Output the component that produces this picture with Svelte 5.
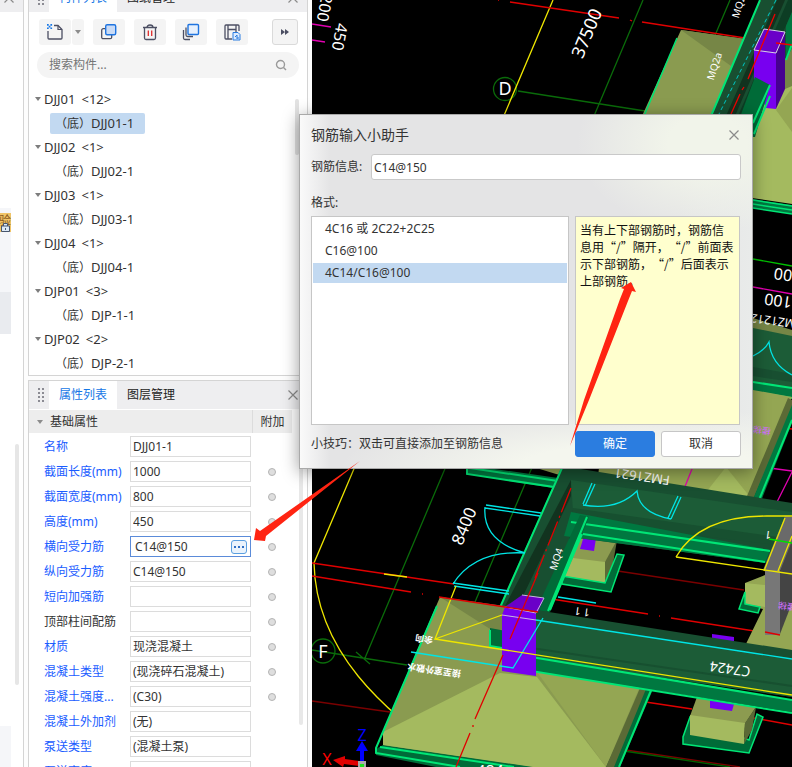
<script>
  let query = $state("");
  let selected = $state("DJJ01-1");
  let steel = $state("C14@150");
  let format = $state(2);
  let open = $state(true);

  const tree = [
    { name: "DJJ01", count: 12, child: "DJJ01-1" },
    { name: "DJJ02", count: 1, child: "DJJ02-1" },
    { name: "DJJ03", count: 1, child: "DJJ03-1" },
    { name: "DJJ04", count: 1, child: "DJJ04-1" },
    { name: "DJP01", count: 3, child: "DJP-1-1" },
    { name: "DJP02", count: 2, child: "DJP-2-1" },
  ];

  const props = [
    { label: "名称", value: "DJJ01-1" },
    { label: "截面长度(mm)", value: "1000", extra: true },
    { label: "截面宽度(mm)", value: "800", extra: true },
    { label: "高度(mm)", value: "450", extra: true },
    { label: "横向受力筋", value: "C14@150", extra: true, active: true },
    { label: "纵向受力筋", value: "C14@150", extra: true },
    { label: "短向加强筋", value: "", extra: true },
    { label: "顶部柱间配筋", value: "", extra: true, plain: true },
    { label: "材质", value: "现浇混凝土", extra: true },
    { label: "混凝土类型", value: "(现浇碎石混凝土)", extra: true },
    { label: "混凝土强度...", value: "(C30)", extra: true },
    { label: "混凝土外加剂", value: "(无)" },
    { label: "泵送类型", value: "(混凝土泵)" },
    { label: "泵送高度(m)", value: "" },
  ];

  const formats = ["4C16 或 2C22+2C25", "C16@100", "4C14/C16@100"];
</script>

{#snippet cross()}
  <svg width="12" height="12" viewBox="0 0 12 12" aria-hidden="true">
    <path d="M1.5 1.5l9 9M10.5 1.5l-9 9" fill="none" stroke="#8a8a8a" stroke-width="1.2" />
  </svg>
{/snippet}

{#snippet grip()}
  <svg class="grip" width="8" height="16" viewBox="0 0 8 16" aria-hidden="true">
    {#each [1, 5, 9, 13] as y}
      <rect x="1" {y} width="2" height="2" fill="#8b8b93" />
      <rect x="5" {y} width="2" height="2" fill="#8b8b93" />
    {/each}
  </svg>
{/snippet}

<div class="app" lang="zh-CN">
  <aside class="rail">
    <div class="rail-head">{@render cross()}</div>
    <div class="rail-group">
      <div class="rail-badge">
        <span>验</span>
        <svg width="9" height="10" viewBox="0 0 9 10" aria-hidden="true">
          <path d="M2.5 4V1.5h4V4M.5 4h8v5.5h-8z" fill="#dce8f5" stroke="#46556e" />
          <path d="M4.5 6v2" stroke="#46556e" />
        </svg>
      </div>
    </div>
    <div class="rail-row"></div>
    <div class="rail-thumb"></div>
    <div class="rail-end"></div>
  </aside>

  <div class="side">
    <section class="panel list-panel">
      <div class="tabs cut">
        {@render grip()}
        <button class="tab active">构件列表</button>
        <button class="tab">图纸管理</button>
        <button class="close" aria-label="关闭">{@render cross()}</button>
      </div>

      <div class="toolbar">
        <div class="split">
          <button class="tool" aria-label="新建">
            <svg width="18" height="18" viewBox="0 0 18 18">
              <path d="M8 2.5h4l4 4V15q0 1-1 1H3q-1 0-1-1V8" fill="none" stroke="#4c4f63" stroke-width="1.3" />
              <path d="M12 2.5v4h4" fill="none" stroke="#4c4f63" stroke-width="1.2" />
              <path d="M1 1h1.7v1.7H1zM4.4 1h1.7v1.7H4.4zM2.7 2.7h1.7v1.7H2.7zM1 4.4h1.7v1.7H1zM4.4 4.4h1.7v1.7H4.4z" fill="#1677e6" />
            </svg>
          </button>
          <button class="tool arrow" aria-label="更多新建">
            <svg width="6" height="4" viewBox="0 0 6 4"><path d="M0 0h6L3 4z" fill="#8c8c8c" /></svg>
          </button>
        </div>
        <button class="tool" aria-label="复制">
          <svg width="18" height="18" viewBox="0 0 18 18">
            <rect x="1.7" y="5.7" width="10" height="10" rx="1.5" fill="none" stroke="#4c4f63" stroke-width="1.3" />
            <rect x="5.7" y="1.7" width="10" height="10" rx="1.5" fill="#c9dbf6" stroke="#1f74e0" stroke-width="1.4" />
          </svg>
        </button>
        <button class="tool" aria-label="删除">
          <svg width="18" height="18" viewBox="0 0 18 18">
            <path d="M2 4.5h14M3.5 5v10q0 1.5 1.5 1.5h8q1.5 0 1.5-1.5V5M6 4.5q0-2.5 3-2.5t3 2.5" fill="none" stroke="#4c4f63" stroke-width="1.3" />
            <path d="M7.3 7.5V13M10.7 7.5V13" stroke="#e02b2b" stroke-width="1.3" />
          </svg>
        </button>
        <button class="tool" aria-label="层间复制">
          <svg width="18" height="18" viewBox="0 0 18 18">
            <path d="M1.5 7v8q0 1.5 1.5 1.5h5M4 4.5V12q0 1.5 1.5 1.5H11" fill="none" stroke="#4c4f63" stroke-width="1.3" />
            <rect x="6" y="1.5" width="10.5" height="10" rx="1" fill="#e6f0fd" stroke="#1f74e0" stroke-width="1.4" />
          </svg>
        </button>
        <button class="tool" aria-label="存档">
          <svg width="18" height="18" viewBox="0 0 18 18">
            <path d="M9 16H3q-1 0-1-1V3q0-1 1-1h12q1 0 1 1v5M5 2v14M5 6.5h8V2M13 6.5V9" fill="none" stroke="#4c4f63" stroke-width="1.3" />
            <path d="M10 9.5h5l2 2V17h-7z" fill="#dcebfd" stroke="#2b7de0" />
            <path d="M12 14l2-2v4M15 14v2" stroke="#2b7de0" fill="none" />
          </svg>
        </button>
        <button class="tool more" aria-label="展开">
          <svg width="8" height="6" viewBox="0 0 8 6"><path d="M0 0l4 3-4 3zM4 0l4 3-4 3z" fill="#4c4f63" /></svg>
        </button>
      </div>

      <label class="search">
        <input type="text" placeholder="搜索构件..." aria-label="搜索构件" bind:value={query} />
        <svg width="12" height="12" viewBox="0 0 12 12" aria-hidden="true">
          <circle cx="5.5" cy="5.5" r="4" fill="none" stroke="#9a9a9a" stroke-width="1.4" />
          <path d="M8.5 8.5l2.5 2.5" stroke="#9a9a9a" stroke-width="1.4" />
        </svg>
      </label>

      <div class="tree">
        {#each tree as node}
          <div class="node">
            <svg width="6" height="4" viewBox="0 0 6 4" aria-hidden="true"><path d="M0 0h6L3 4z" fill="#7d7d7d" /></svg>
            <span class="code">{node.name}</span>
            <span class="code count">&lt;{node.count}&gt;</span>
          </div>
          <div class="leaf-row">
            <button
              class={selected == node.child ? "leaf active" : "leaf"}
              onclick={() => (selected = node.child)}>（底）<span class="code">{node.child}</span></button
            >
          </div>
        {/each}
        <div class="thumb"></div>
      </div>
    </section>

    <section class="panel prop-panel">
      <div class="tabs">
        {@render grip()}
        <button class="tab active">属性列表</button>
        <button class="tab">图层管理</button>
        <button class="close" aria-label="关闭">{@render cross()}</button>
      </div>
      <div class="prop-body">
        <div class="props">
          <div class="prop-head">
            <svg width="6" height="4" viewBox="0 0 6 4" aria-hidden="true"><path d="M0 0h6L3 4z" fill="#8c8c8c" /></svg>
            <span class="group">基础属性</span>
            <span class="attach">附加</span>
          </div>
          {#each props as prop, i}
            <div class="prop">
              <label for="prop-{i}" class:plain={prop.plain}>{prop.label}</label>
              <div class="field" class:focus={prop.active}>
                <input id="prop-{i}" type="text" value={prop.value} />
                {#if prop.active}
                  <button class="dots" aria-label="打开钢筋输入小助手" onclick={() => (open = true)}>
                    <svg width="10" height="2" viewBox="0 0 10 2"><path d="M0 0h2v2H0zM4 0h2v2H4zM8 0h2v2H8z" fill="#2f6fc4" /></svg>
                  </button>
                {/if}
              </div>
              {#if prop.extra}
                <input class="mark" type="checkbox" aria-label="{prop.label} 附加" />
              {/if}
            </div>
          {/each}
        </div>
        <div class="prop-thumb"></div>
      </div>
    </section>
  </div>

  <main class="view">
    <svg class="scene" viewBox="312 0 480 767" preserveAspectRatio="xMinYMin slice" aria-label="三维视图">
      <!-- axis grid -->
      <g fill="none" stroke="#0a6b0a" stroke-width="1.3">
        <path d="M643 0L365 658M730 0L475 602M518 91L645 111M312 650l95 15M356 652l14 12" />
        <circle cx="505" cy="89" r="11.5" />
        <circle cx="323" cy="651" r="12" />
      </g>
      <path d="M553 0L314 563C316 650 380 710 464 767" fill="none" stroke="#eee600" stroke-width="1.3" />
      <g fill="none" stroke="#e00000" stroke-width="1.3">
        <path d="M498 0h1M510 2l109 16M630 20l2 1M642 22l103 16M312 563l142 21M312 576l99 16M422 594h1M545 598l103 16M659 616h1M671 618l109 17M639 701l53 8M754 718l38 7M783 428l9 1" />
        <path d="M312 701l78 11M611 570l133 20M619 749l121 18" stroke="#7a0000" />
        <path d="M384 574l23 3" stroke="#eee600" />
        <path d="M624 751l106 16" stroke="#006000" />
      </g>
      <g fill="none" stroke="#e000b0" stroke-width="1.3">
        <path d="M312 24l19 3M312 40l13 2M753 287l39 7M762 467l30 4M792 472l-15 30" />
        <path d="M753 259l39 7" stroke="#00c000" />
      </g>

      <!-- footing at the top right -->
      <path d="M681 30l64 9-34 77h-69z" fill="#8a9b50" />
      <path d="M681 30l64 9-14 27z" fill="#768646" />
      <path d="M677 38l-33 78" stroke="#00e676" stroke-width="1.5" />
      <path d="M776 40l16-10v174l-40-6v-90z" fill="#a4ba5f" />
      <path d="M785 50l7-6v42l-7 3z" fill="#768646" />
      <path d="M776 110l16-22v44z" fill="#94a653" />
      <path d="M753 199l39 6v9l-39-6z" fill="#007840" />
      <path d="M753 200l39 6M753 204l39 6M753 208l39 6" stroke="#00e676" stroke-width="1.5" />
      <path d="M760 0h32v45l-34 71h-47z" fill="#184f31" />
      <path d="M777 0h8l-50 116h-9z" fill="#12331f" />
      <path d="M792 0v12l-46 104h-8L788 0z" fill="#0d3d24" />
      <path d="M792 12v36l-6 12v-34z" fill="#007840" />
      <path d="M760 0l-49 116M792 44l-6 16" stroke="#00e676" stroke-width="2" />
      <path d="M776 0l-58 116" stroke="#00c8c8" stroke-dasharray="4 3" />
      <path d="M764 29l21 3-9 21-22-3z" fill="#6a00c8" />
      <path d="M754 50l22 3v56l-10-1-12-28z" fill="#7800f0" />
      <path d="M776 53l9-21v57l-9 20z" fill="#460090" />
      <path d="M764 29l21 3-9 21-22-3z" fill="none" stroke="#d8d0e8" />
      <path d="M755 77l15 8-15 52h-3v-20h-12z" fill="#006b38" />
      <path d="M770 85l-17 38M770 96l-16 38" stroke="#00e676" stroke-width="2" />
      <path d="M775 14l-27 65M744 87l-2 3M740 94l-9 20M776 43l16 2" stroke="#f00000" stroke-width="1.3" />

      <!-- right of the dialog -->
      <path d="M753 318l39 12v10l-39-8z" fill="#768646" />
      <path d="M753 328l39 8v62l-39-6z" fill="#1c5c37" />
      <path d="M753 367l39 7v8l-39-6z" fill="#184f31" />
      <path d="M753 382l39 6v10l-39-6z" fill="#007840" />
      <path d="M753 382l39 6M753 392l39 6" stroke="#00e676" stroke-width="2" />
      <path d="M753 356q12-6 16-14q2 22 23 33" fill="none" stroke="#00e5e5" stroke-width="1.3" />
      <path d="M600 460l153-70 39 7-44 105-150-26z" fill="#94a653" />
      <path d="M729 471l24-70 35-4-40 92z" fill="#94a653" />
      <path d="M726 467l24 30-43-6z" fill="#a4ba5f" />
      <path d="M788 398l4 2v10l-39 90-6-4z" fill="#5b6a36" />
      <path d="M792 405v18l-31 78-8-2z" fill="#007840" />
      <path d="M792 420l-33 80" stroke="#00e676" stroke-width="2" />
      <path d="M692 469l-8 20" stroke="#e000b0" stroke-width="1.3" />

      <!-- upper beam and the diagonal one -->
      <path d="M467 465l98 14-6 10-92-15z" fill="#007840" />
      <path d="M510 460h60l-4 17z" fill="#94a653" />
      <path d="M467 469v5l87 13M470 468l88 13" fill="none" stroke="#00e676" stroke-width="2" />
      <path d="M572 535l45 5-12 47-45-6z" fill="#8c9b50" />
      <path d="M573 558l32 4v21l-40-7z" fill="#a4ba5f" />
      <path d="M605 562l12-22-5 30-7 13z" fill="#5b6a36" />
      <path d="M562 576l43 7 12-29 7 1-13 37-49-8z" fill="#006b38" stroke="#00e676" stroke-width="1.5" />
      <path d="M584 536l12 2-2 13-14-2z" fill="#7800f0" />
      <path d="M562 466l230 37v47l-27 13-195-26-22 75-58 28V628z" fill="#184f31" />
      <path d="M571 480l221 32v31l-219-31z" fill="#1c5c37" />
      <path d="M573 508l219 31v8l-221-27z" fill="#175030" />
      <path d="M571 512l199 38-5 13-201-27z" fill="#007840" />
      <path d="M571 522l199 29M583 534l182 28" stroke="#00e676" stroke-width="2" />
      <path d="M571 480v16l-48 100-18 10z" fill="#12331f" />
      <path d="M580 515l9 2-39 95-14-2z" fill="#006b38" />
      <path d="M562 468l-72 162v16l15 3M587 517l-39 94M582 534l-32 76" fill="none" stroke="#00e676" stroke-width="2" />
      <path d="M571 488l-36 90" stroke="#e00000" stroke-width="1.3" stroke-dasharray="26 4 2 4" />
      <g fill="none" stroke="#00e5e5" stroke-width="1.3">
        <path d="M595 484l-10 22M592 483l-9 21M583 505q34 6 54-14q2 22 34 28M671 519l10-22M668 518l10-22" />
        <path d="M486 505l55 8M485 508l55 8M485 507q-3 34 40 46q-50-3-72 31M453 583l56 8M454 586l55 8M558 597l38 6" />
      </g>

      <!-- stair column -->
      <path d="M765 575l-20 8v22l18 4-20 41 49 6v-80z" fill="#94a653" />
      <path d="M745 583l20 2v22l-20-3z" fill="#a4ba5f" />
      <path d="M745 592l-6 17 19 4 2-6-15-3z" fill="#006b38" stroke="#00e676" stroke-width="1.5" />
      <path d="M785 516l7 1v40l-12 14-17-1z" fill="#6a6a6a" />
      <path d="M765 570h15v65h-15z" fill="#777" />
      <path d="M780 571l12-30v62l-12 31z" fill="#444" />
      <path d="M676 557q24-42 94-41h22M676 557l116 17M785 518l-21 53M792 536l-14 35" fill="none" stroke="#eee600" stroke-width="1.3" />
      <path d="M769 539l23 4" stroke="#00e000" stroke-width="1.3" />
      <path d="M765 632l15 3" stroke="#e00000" stroke-width="1.3" />

      <!-- large footing -->
      <path d="M383 745l-7 4v6l60 12h184l34-80-14-2-34 82z" fill="#006b38" />
      <path d="M440 597l65 10 137 83-36 77h-70l-153-22v-14z" fill="#8a9b50" />
      <path d="M440 597l65 9-4 30z" fill="#768646" />
      <path d="M383 732l117-59 37 4 69 90h-73l-150-22z" fill="#a4ba5f" />
      <path d="M537 672l103 14-34 81z" fill="#94a653" />
      <path d="M640 688l6 1-32 78h-8z" fill="#5b6a36" />
      <path d="M437 606l-61 142v5l84 14M380 747l134 20M652 688l-33 79" fill="none" stroke="#00e676" stroke-width="2" />
      <path d="M490 628l62 12v30h-21v-17l-41-7z" fill="#006b38" />

      <!-- lower small footing -->
      <path d="M690 717l-7 20v7l66 9 14-36-6-3-8 26z" fill="#006b38" stroke="#00e676" stroke-width="1.5" />
      <path d="M697 697l59 10-11 17-55-8z" fill="#8c9b50" />
      <path d="M690 715l55 8-1 21-54-9z" fill="#a4ba5f" />
      <path d="M745 723l11-16-4 23-8 14z" fill="#5b6a36" />
      <path d="M710 700l24 4-2 7-22-3zM712 634l22 3v6l-22-4z" fill="#7800f0" />

      <!-- lower beam -->
      <path d="M536 610l256 40v47l-256-38z" fill="#184f31" />
      <path d="M536 620l256 40v37l-261-40z" fill="#1c5c37" />
      <path d="M531 648l261 38" stroke="#175030" stroke-width="2" />
      <path d="M531 656l261 44v12l-261-41z" fill="#007840" />
      <path d="M792 700l-261-43v14l261 42" fill="none" stroke="#00e676" stroke-width="2" />
      <path d="M490 630v16l12 2" fill="none" stroke="#00e676" stroke-width="2" />
      <path d="M522 595l22 3-6 14-33-5z" fill="#6a00c8" />
      <path d="M505 607l31 6v63l-34-5v-56z" fill="#7800f0" />
      <path d="M522 595l22 3-8 15-31-6M502 615l34 5" fill="none" stroke="#c8b8e0" />
      <path d="M411 652l102 16 30-50M536 620l256 39" fill="none" stroke="#00e5e5" stroke-width="1.3" />
      <path d="M456 586l-21 53 67-24M435 639l357 56" fill="none" stroke="#eee600" stroke-width="1.3" />
      <path d="M439 597l99 15M538 573l-28 66M503 655l-28 64M473 725v2M470 733l-14 34" fill="none" stroke="#e00000" stroke-width="1.3" />

      <!-- labels -->
      <g class="labels" fill="#fff" text-anchor="middle">
        <text x="505" y="95" font-size="18">D</text>
        <text x="323" y="658" font-size="18">F</text>
        <g transform="translate(586 33) rotate(-67)"><text y="7" font-size="18">37500</text></g>
        <g transform="translate(464 526) rotate(-67)"><text y="6" font-size="17">8400</text></g>
        <g transform="translate(340 37) rotate(100)"><text y="6" font-size="16">450</text></g>
        <g transform="translate(325 8) rotate(100)"><text y="6" font-size="16">200</text></g>
        <g transform="translate(714 66) rotate(-72)"><text y="4" font-size="10">MQ2a</text></g>
        <g transform="translate(739 4) rotate(-72)"><text y="4" font-size="10">MQ2a</text></g>
        <g transform="translate(556 559) rotate(-72)"><text y="4" font-size="10">MQ4</text></g>
        <g transform="translate(730 669) rotate(188)"><text y="5" font-size="14">C7424</text></g>
        <g transform="translate(642 477) rotate(188)"><text y="5" font-size="13">FMZ1621</text></g>
        <g transform="translate(776 322) rotate(188)"><text y="5" font-size="12">FMZ1212</text></g>
        <g transform="translate(778 301) rotate(188)"><text y="6" font-size="16">100</text></g>
        <g transform="translate(783 275) rotate(188)"><text y="6" font-size="16">00</text></g>
        <g transform="translate(582 612) rotate(188)"><text y="4" font-size="11">1 1</text></g>
        <g transform="translate(768 535) rotate(188)"><text y="4" font-size="11">1</text></g>
        <g transform="translate(434 670) rotate(188)" font-weight="700"><text y="3" font-size="9">接至室外散水</text></g>
        <g transform="translate(424 639) rotate(188)" font-weight="700"><text y="3" font-size="9">余向</text></g>
        <g transform="translate(762 430) rotate(188)" fill="#d070ff"><text y="3" font-size="9">楼梯</text></g>
        <g transform="translate(787 606) rotate(188)" fill="#d070ff"><text y="3" font-size="9">楼梯</text></g>
        <text x="490" y="777" font-size="16">484</text>
        <text x="362" y="741" font-size="16" fill="#0000ff">Z</text>
        <text x="327" y="765" font-size="16" fill="#ff0000">X</text>
      </g>
      <path d="M362 741l6 10h-4v12h-4v-12h-4z" fill="#0000ff" />
      <path d="M333 760l12-4v3l14 2v5l-15-2-1 3z" fill="#e00000" />
      <path d="M358 761h8v6h-8z" fill="#aaa" />
      <path d="M360 764h4v3h-4z" fill="#20e020" />
    </svg>
  </main>

  {#if open}
    <div class="dialog" role="dialog" aria-labelledby="helper-title">
      <header>
        <h1 id="helper-title">钢筋输入小助手</h1>
        <button class="close" aria-label="关闭" onclick={() => (open = false)}>{@render cross()}</button>
      </header>
      <div class="steel">
        <label for="steel">钢筋信息:</label>
        <input id="steel" type="text" bind:value={steel} />
      </div>
      <p class="caption">格式:</p>
      <div class="columns">
        <div class="formats">
          {#each formats as item, i}
            <button class={format == i ? "active" : ""} onclick={() => (format = i)}>{item}</button>
          {/each}
        </div>
        <p class="note">当有上下部钢筋时，钢筋信息用“/”隔开，“/”前面表示下部钢筋，“/”后面表示上部钢筋。</p>
      </div>
      <footer>
        <span>小技巧：双击可直接添加至钢筋信息</span>
        <button class="primary" onclick={() => (open = false)}>确定</button>
        <button onclick={() => (open = false)}>取消</button>
      </footer>
    </div>
  {/if}

  <svg class="arrows" width="792" height="767" viewBox="0 0 792 767" aria-hidden="true">
    <path d="M360 461L260 531l-4-3-2 12 11 1 1-5z" fill="#ff2412" />
    <path d="M570 446l14-46 36-101 4-10-3-1 10-6 5 10-4-1-4 10-39 99z" fill="#ff2412" />
  </svg>
</div>

<style>
  :global(body) {
    margin: 0;
    background: #fff;
  }

  .app {
    position: relative;
    display: flex;
    height: 100vh;
    overflow: hidden;
    font: 12px/16px "Noto Sans", "Noto Sans CJK SC", sans-serif;
    color: #333;
    background: #fdfdfd;
  }

  .app * {
    box-sizing: border-box;
  }

  button,
  input {
    margin: 0;
    padding: 0;
    border: 0;
    background: none;
    font: inherit;
    color: inherit;
  }

  svg {
    display: block;
    flex: none;
  }

  .rail {
    flex: none;
    display: flex;
    flex-direction: column;
    width: 24px;
    border-right: 1px solid #d4d4d4;
    background: #fff;
  }

  .rail-head {
    display: flex;
    align-items: flex-end;
    justify-content: flex-end;
    height: 12px;
    padding: 0 8px 8px 0;
    background: #eeeef0;
  }

  .rail-group {
    width: 11px;
    height: 84px;
    margin-top: 196px;
    padding-top: 5px;
    background: #f5f6f9;
  }

  .rail-badge {
    position: relative;
    display: flex;
    justify-content: flex-end;
    height: 19px;
    overflow: hidden;
    color: #8a5a1c;
    background: #f0c468;
  }

  .rail-badge svg {
    position: absolute;
    right: 1px;
    bottom: 0;
  }

  .rail-row {
    width: 11px;
    height: 42px;
    background: #e9ebef;
  }

  .rail-thumb {
    width: 4px;
    height: 241px;
    margin: 110px 0 0 15px;
    border-radius: 2px;
    background: #e6e6e6;
  }

  .rail-end {
    flex: 1;
    width: 11px;
    margin-top: 41px;
    background: #f5f6f9;
  }

  .side {
    flex: none;
    display: flex;
    flex-direction: column;
    gap: 4px;
    width: 280px;
    margin: 0 4px;
  }

  .panel {
    border: 1px solid #d4d4d4;
    background: #fff;
    overflow: hidden;
  }

  .list-panel {
    flex: none;
    height: 376px;
    border-top: 0;
  }

  .prop-panel {
    flex: 1;
    display: flex;
    flex-direction: column;
    border-bottom: 0;
  }

  .tabs {
    flex: none;
    display: flex;
    align-items: center;
    height: 28px;
    background: #eeeef0;
  }

  .tabs.cut {
    align-items: flex-end;
    height: 12px;
    overflow: hidden;
  }

  .grip {
    margin: 6px 4px 6px 8px;
  }

  .tab {
    height: 28px;
    padding: 0 10px;
    color: #222;
  }

  .tab.active {
    color: #1677e6;
    background: #fff;
  }

  .tabs .close {
    margin-left: auto;
    padding: 8px;
  }

  .toolbar {
    display: flex;
    gap: 9px;
    padding: 7px 9px 7px 10px;
  }

  .split {
    display: flex;
    gap: 1px;
  }

  .tool {
    display: flex;
    align-items: center;
    justify-content: center;
    width: 32px;
    height: 26px;
    border-radius: 3px;
    background: #f4f4f4;
  }

  .tool.arrow {
    width: 12px;
  }

  .tool.more {
    width: 26px;
    margin-left: auto;
    border: 1px solid #dadada;
  }

  .search {
    display: flex;
    align-items: center;
    height: 26px;
    margin: 0 8px;
    padding: 0 12px;
    border-radius: 13px;
    background: #f4f4f4;
  }

  .search input {
    flex: 1;
    min-width: 0;
    outline: 0;
  }

  .search input::placeholder {
    color: #757575;
    opacity: 1;
  }

  .tree {
    position: relative;
    padding: 9px 8px 0 6px;
  }

  .node,
  .leaf-row {
    display: flex;
    align-items: center;
    height: 24px;
  }

  .node svg {
    margin-right: 3px;
  }

  .code {
    font-size: 13px;
  }

  .count {
    margin-left: 6px;
  }

  .leaf {
    height: 21px;
    margin-left: 15px;
    padding: 0 11px 0 5px;
    border-radius: 2px;
  }

  .leaf.active {
    background: #c2d9f1;
  }

  .thumb {
    position: absolute;
    top: 21px;
    right: 8px;
    width: 4px;
    height: 56px;
    border-radius: 2px;
    background: #e2e2e2;
  }

  .prop-body {
    flex: 1;
    display: flex;
    min-height: 0;
    padding-top: 1px;
  }

  .props {
    flex: 1;
    overflow: hidden;
  }

  .prop-thumb {
    width: 4px;
    height: 315px;
    margin: 0 4px 0 7px;
    border-radius: 2px;
    background: #e8e8e8;
  }

  .prop-head {
    display: flex;
    align-items: center;
    height: 23px;
    margin-bottom: 1px;
    padding-left: 8px;
    background: #ededed;
  }

  .group {
    flex: 1;
    padding-left: 7px;
  }

  .attach {
    width: 40px;
    line-height: 23px;
    border-left: 1px solid #dcdcdc;
    text-align: center;
  }

  .prop {
    display: flex;
    align-items: center;
    height: 25px;
    padding-left: 15px;
  }

  .prop label {
    width: 86px;
    color: #1a5cff;
    white-space: nowrap;
  }

  .prop label.plain {
    color: #333;
  }

  .field {
    display: flex;
    align-items: center;
    width: 121px;
    height: 21px;
    padding: 0 2px;
    border: 1px solid #dcdcdc;
    background: #fff;
  }

  .field.focus {
    padding: 0 3px 0 4px;
    border-color: #5b8bd9;
  }

  .field input {
    flex: 1;
    min-width: 0;
    outline: 0;
  }

  .dots {
    display: flex;
    align-items: center;
    justify-content: center;
    width: 16px;
    height: 14px;
    border: 1px solid #5a9fe0;
    border-radius: 3px;
    background: #eaf3fc;
  }

  .mark {
    appearance: none;
    width: 8px;
    height: 8px;
    margin-left: 17px;
    border: 1px solid #b4b4b4;
    border-radius: 50%;
    background: #dedede;
  }

  .view {
    flex: 1;
    min-width: 0;
    overflow: hidden;
    background: #000;
  }

  .scene {
    width: 100%;
    height: 100%;
  }

  .labels {
    font-family: "Noto Sans", "Noto Sans CJK SC", sans-serif;
  }

  .dialog {
    position: absolute;
    top: 114px;
    left: 299px;
    width: 454px;
    padding: 0 11px 11px;
    border: 1px solid #a9a9a9;
    background:
      radial-gradient(ellipse 130px 90px at 90% 8%, #f1f4ea 30%, transparent),
      radial-gradient(ellipse 300px 60px at 75% 100%, #f4f6ee 40%, transparent),
      linear-gradient(90deg, #fafafa, #e4e4e5 30px, #e4e4e5 380px, #e9ebea);
    box-shadow: 0 3px 16px rgba(0, 0, 0, 0.4);
  }

  .dialog header {
    display: flex;
    align-items: center;
    justify-content: space-between;
    height: 39px;
  }

  .dialog h1 {
    margin: 0;
    font-size: 14px;
    font-weight: 400;
  }

  .dialog p {
    margin: 0;
  }

  .dialog .close {
    margin-right: 1px;
  }

  .steel {
    display: flex;
    align-items: center;
  }

  .steel label {
    width: 60px;
  }

  .steel input {
    flex: 1;
    min-width: 0;
    height: 26px;
    padding: 0 2px;
    border: 1px solid #c9c9c9;
    border-radius: 3px;
    background: #fff;
  }

  .dialog .caption {
    padding: 15px 0 5px;
  }

  .columns {
    display: flex;
    gap: 6px;
    height: 209px;
    padding-right: 1px;
  }

  .formats {
    flex: 1;
    display: flex;
    flex-direction: column;
    padding: 1px;
    border: 1px solid #c6c6c6;
    background: #fff;
  }

  .formats button {
    height: 20px;
    margin-top: 1px;
    margin-bottom: 1px;
    padding-left: 12px;
    text-align: left;
  }

  .formats .active {
    background: #c2d9f1;
  }

  .note {
    width: 165px;
    padding: 4px 5px 4px 4px;
    border: 1px solid #c6c6c6;
    color: #111;
    background: #ffffce;
    font-family: "Noto Sans CJK SC", sans-serif;
    line-height: 17px;
    text-spacing-trim: space-all;
  }

  .dialog footer {
    display: flex;
    align-items: center;
    gap: 6px;
    padding-top: 6px;
  }

  .dialog footer span {
    flex: 1;
  }

  .dialog footer button {
    width: 80px;
    height: 26px;
    border: 1px solid #c6c6c6;
    border-radius: 3px;
    background: #fff;
  }

  .dialog footer .primary {
    border-color: #2b7de0;
    color: #fff;
    background: #2b7de0;
  }

  .arrows {
    position: absolute;
    top: 0;
    left: 0;
    pointer-events: none;
  }
</style>
